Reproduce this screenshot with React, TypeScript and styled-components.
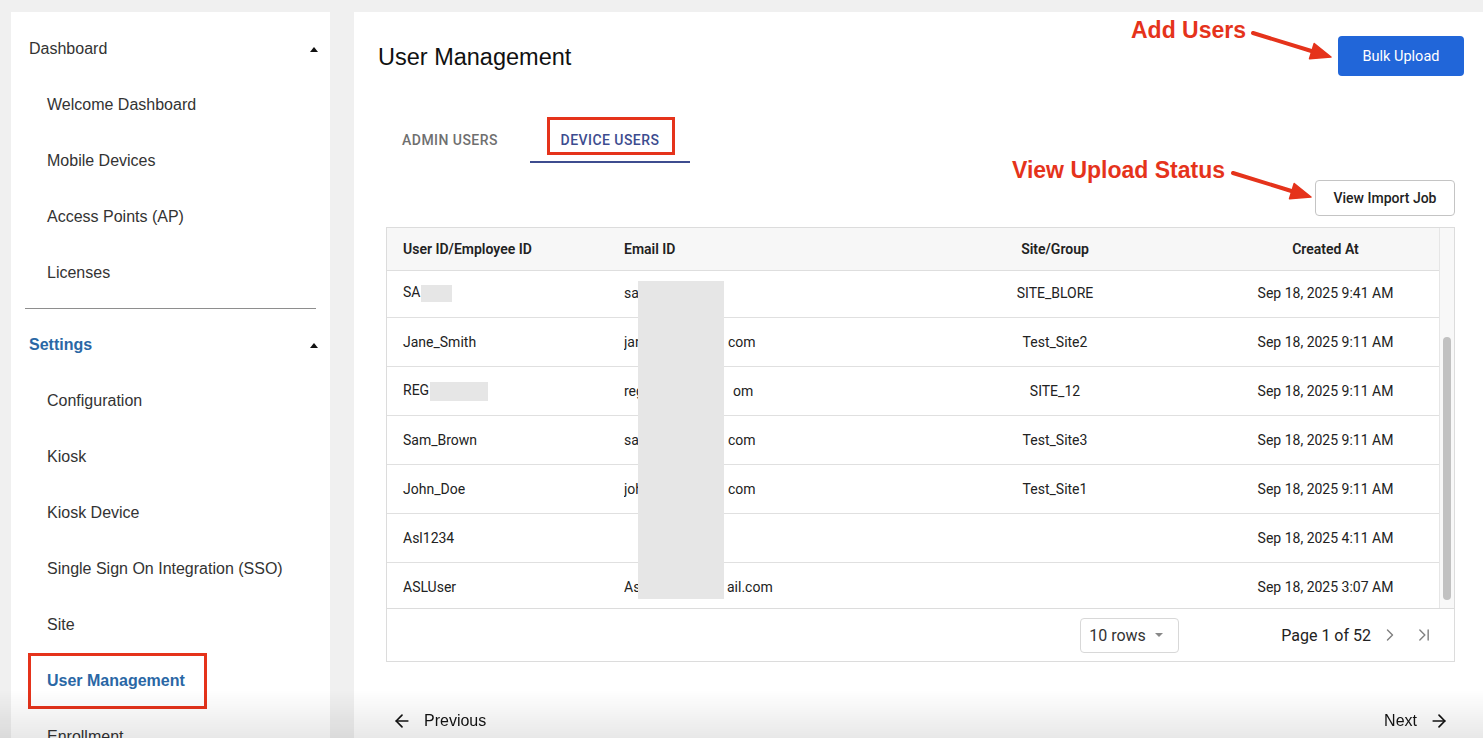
import React from 'react';
import styled, { createGlobalStyle } from 'styled-components';
import { ChevronRight, ChevronLast, ArrowLeft, ArrowRight } from 'lucide-react';

const GlobalStyle = createGlobalStyle`
  html, body { margin: 0; padding: 0; background: #f0f0f0; overflow: hidden; }
  *, *::before, *::after { box-sizing: border-box; }
  #root { height: 100vh; }
`;

const SANS = `"Liberation Sans", Arial, sans-serif`;
const ROBOTO = `Roboto, "Liberation Sans", Arial, sans-serif`;
const BLUE = '#2a67a5';
const RED = '#e5331b';

const Page = styled.div`
  display: flex;
  gap: 24px;
  height: 100vh;
  padding: 12px 0 0 11px;
`;

/* ---------- Sidebar ---------- */
const Sidebar = styled.nav`
  width: 319px;
  flex-shrink: 0;
  background: #fff;
  padding-top: 9px;
  font-family: ${SANS};
  overflow: hidden;
`;

const GroupHeader = styled.div<{ $active?: boolean }>`
  height: 56px;
  display: flex;
  align-items: center;
  justify-content: space-between;
  padding: 0 12px 0 18px;
  font-size: 16px;
  color: ${(p) => (p.$active ? BLUE : '#333')};
  font-weight: ${(p) => (p.$active ? 700 : 400)};
`;

const Caret = styled.span`
  width: 0;
  height: 0;
  border-left: 4px solid transparent;
  border-right: 4px solid transparent;
  border-bottom: 5px solid #111;
`;

const NavItem = styled.div<{ $active?: boolean; $boxed?: boolean }>`
  position: relative;
  height: 56px;
  display: flex;
  align-items: center;
  padding-left: 36px;
  font-size: 16px;
  color: ${(p) => (p.$active ? BLUE : '#333')};
  font-weight: ${(p) => (p.$active ? 700 : 400)};
  &::after {
    content: '';
    display: ${(p) => (p.$boxed ? 'block' : 'none')};
    position: absolute;
    left: 17px;
    top: 0;
    width: 179px;
    height: 56px;
    border: 3px solid ${RED};
  }
`;

const Divider = styled.div`
  height: 1px;
  background: #8e8e8e;
  margin: 7px 14px 8px 14px;
`;

/* ---------- Main ---------- */
const Main = styled.main`
  flex: 1;
  position: relative;
  background: #fff;
  display: flex;
  flex-direction: column;
  padding-top: 24px;
  overflow: hidden;
`;

const HeaderRow = styled.div`
  display: flex;
  align-items: center;
  justify-content: space-between;
  height: 40px;
  padding: 0 19px 0 24px;
`;

const Title = styled.h1`
  margin: 0;
  padding-top: 2px;
  font-family: ${SANS};
  font-weight: 400;
  font-size: 23.5px;
  color: #111;
`;

const PrimaryButton = styled.button`
  width: 126px;
  height: 40px;
  border: none;
  border-radius: 4px;
  background: #2166d9;
  color: #fff;
  font-family: ${ROBOTO};
  font-size: 14.5px;
`;

const Tabs = styled.div`
  display: flex;
  margin-top: 38px;
  padding-left: 16px;
`;

const Tab = styled.div<{ $selected?: boolean }>`
  position: relative;
  width: 160px;
  height: 49px;
  display: flex;
  align-items: center;
  justify-content: center;
  padding-top: 3px;
  font-family: ${ROBOTO};
  font-size: 14px;
  font-weight: 500;
  letter-spacing: 0.45px;
  text-transform: uppercase;
  color: ${(p) => (p.$selected ? '#3d4c8f' : '#6f6f6f')};
  &::after {
    content: '';
    display: ${(p) => (p.$selected ? 'block' : 'none')};
    position: absolute;
    left: 0;
    right: 0;
    bottom: 0;
    height: 2px;
    background: #3d4c8f;
  }
`;

const TabBox = styled.span`
  position: absolute;
  left: 17px;
  top: 3px;
  width: 128px;
  height: 38px;
  border: 3px solid ${RED};
`;

const ActionsRow = styled.div`
  display: flex;
  justify-content: flex-end;
  margin-top: 17px;
  padding-right: 28px;
`;

const OutlineButton = styled.button`
  width: 140px;
  height: 36px;
  background: #fff;
  border: 1px solid #c4c4c4;
  border-radius: 4px;
  font-family: ${ROBOTO};
  font-size: 14px;
  font-weight: 500;
  color: #222;
`;

/* ---------- Table ---------- */
const TableCard = styled.div`
  margin: 11px 28px 0 32px;
  height: 435px;
  border: 1px solid #dcdcdc;
  display: flex;
  flex-direction: column;
  font-family: ${ROBOTO};
  font-size: 14px;
  color: #222;
`;

const TableTop = styled.div`
  display: flex;
  height: 380px;
`;

const TableScroll = styled.div`
  flex: 1;
  display: flex;
  flex-direction: column;
  overflow: hidden;
`;

const COLS = '220px 291px 314px 1fr';

const HeadRow = styled.div`
  display: grid;
  grid-template-columns: ${COLS};
  height: 43px;
  align-items: center;
  background: #f7f7f7;
  border-bottom: 1px solid #dedede;
  font-weight: 600;
  flex-shrink: 0;
`;

const Cell = styled.div<{ $align?: 'left' | 'center'; $pad?: number }>`
  text-align: ${(p) => p.$align || 'left'};
  padding-left: ${(p) => (p.$align === 'center' ? 0 : p.$pad ?? 16)}px;
  white-space: nowrap;
  overflow: hidden;
`;

const Body = styled.div`
  position: relative;
  flex: 1;
  overflow: hidden;
`;

const RowList = styled.div`
  margin-top: -2px;
`;

const Row = styled.div`
  display: grid;
  grid-template-columns: ${COLS};
  height: 49px;
  align-items: center;
  border-bottom: 1px solid #e0e0e0;
`;

const Redact = styled.span<{ $w: number; $h: number }>`
  display: inline-block;
  width: ${(p) => p.$w}px;
  height: ${(p) => p.$h}px;
  background: #e6e6e6;
  vertical-align: middle;
  margin-left: 1px;
`;

const EmailCell = styled.div`
  display: grid;
  grid-template-columns: 100px auto;
  padding-left: 17px;
  white-space: nowrap;
`;

const EmailHead = styled.span`
  overflow: hidden;
`;

const EmailTail = styled.span<{ $shift: number }>`
  padding-left: ${(p) => 4 + p.$shift}px;
`;

const RedactColumn = styled.div`
  position: absolute;
  left: 251px;
  top: 10px;
  width: 86px;
  height: 318px;
  background: #e6e6e6;
`;

const ScrollTrack = styled.div`
  position: relative;
  width: 15px;
  background: #f8f8f8;
  border-left: 1px solid #e6e6e6;
`;

const ScrollThumb = styled.div`
  position: absolute;
  left: 3px;
  top: 109px;
  width: 8px;
  height: 263px;
  border-radius: 4px;
  background: #c1c1c1;
`;

const TableFooter = styled.div`
  flex: 1;
  display: flex;
  align-items: center;
  justify-content: flex-end;
  border-top: 1px solid #dcdcdc;
  padding-right: 17px;
`;

const RowsSelect = styled.div`
  width: 99px;
  height: 35px;
  display: flex;
  align-items: center;
  justify-content: space-between;
  padding: 0 15px 0 8px;
  border: 1px solid #d8d8d8;
  border-radius: 4px;
  font-size: 16px;
  color: #333;
  margin-right: 102px;
`;

const DownCaret = styled.span`
  width: 0;
  height: 0;
  border-left: 4px solid transparent;
  border-right: 4px solid transparent;
  border-top: 4px solid #888;
`;

const PageText = styled.span`
  font-size: 16px;
  color: #222;
`;

const PagerIcon = styled.span<{ $gap: number }>`
  display: flex;
  align-items: center;
  justify-content: center;
  width: 26px;
  color: #808080;
  margin-left: ${(p) => p.$gap}px;
`;

/* ---------- Bottom nav ---------- */
const BottomNav = styled.div`
  position: relative;
  z-index: 2;
  display: flex;
  justify-content: space-between;
  align-items: center;
  height: 28px;
  margin-top: 45px;
  padding: 0 34px 0 38px;
  font-family: ${SANS};
  font-size: 16px;
  color: #111;
`;

const NavLink = styled.span`
  display: flex;
  align-items: center;
  gap: 12px;
`;

const Fade = styled.div`
  position: fixed;
  left: 0;
  right: 0;
  bottom: 0;
  height: 48px;
  background: linear-gradient(to bottom, rgba(0, 0, 0, 0), rgba(0, 0, 0, 0.09));
  pointer-events: none;
  z-index: 1;
`;

/* ---------- Annotations ---------- */
const Note = styled.div<{ $x: number; $y: number }>`
  position: absolute;
  left: ${(p) => p.$x}px;
  top: ${(p) => p.$y}px;
  font-family: ${SANS};
  font-weight: 700;
  font-size: 23px;
  line-height: 26px;
  color: ${RED};
  white-space: nowrap;
`;

const ArrowSvg = styled.svg<{ $x: number; $y: number }>`
  position: absolute;
  left: ${(p) => p.$x}px;
  top: ${(p) => p.$y}px;
`;

const Arrow = ({ x, y }: { x: number; y: number }) => (
  <ArrowSvg $x={x} $y={y} width={86} height={34} viewBox="0 0 86 34">
    <line x1={4} y1={4} x2={64} y2={22.5} stroke={RED} strokeWidth={4} strokeLinecap="round" />
    <polygon points="82,28 60.5,29.8 65.2,14.5" fill={RED} stroke={RED} strokeWidth={1.5} strokeLinejoin="round" />
  </ArrowSvg>
);

type RowData = {
  id: string;
  idBox?: [number, number];
  head: string;
  tail: string;
  shift?: number;
  site: string;
  created: string;
};

const rows: RowData[] = [
  { id: 'SA', idBox: [31, 17], head: 'sa', tail: '', site: 'SITE_BLORE', created: 'Sep 18, 2025 9:41 AM' },
  { id: 'Jane_Smith', head: 'jane', tail: 'com', site: 'Test_Site2', created: 'Sep 18, 2025 9:11 AM' },
  { id: 'REG', idBox: [58, 19], head: 'reg', tail: 'om', shift: 5, site: 'SITE_12', created: 'Sep 18, 2025 9:11 AM' },
  { id: 'Sam_Brown', head: 'sam', tail: 'com', site: 'Test_Site3', created: 'Sep 18, 2025 9:11 AM' },
  { id: 'John_Doe', head: 'john', tail: 'com', site: 'Test_Site1', created: 'Sep 18, 2025 9:11 AM' },
  { id: 'Asl1234', head: '', tail: '', site: '', created: 'Sep 18, 2025 4:11 AM' },
  { id: 'ASLUser', head: 'Asl', tail: 'ail.com', shift: -1, site: '', created: 'Sep 18, 2025 3:07 AM' },
];

const dashboardItems = ['Welcome Dashboard', 'Mobile Devices', 'Access Points (AP)', 'Licenses'];
const settingsItems = ['Configuration', 'Kiosk', 'Kiosk Device', 'Single Sign On Integration (SSO)', 'Site'];

export default function App() {
  return (
    <>
      <GlobalStyle />
      <Page>
        <Sidebar>
          <GroupHeader>
            Dashboard
            <Caret />
          </GroupHeader>
          {dashboardItems.map((t) => (
            <NavItem key={t}>{t}</NavItem>
          ))}
          <Divider />
          <GroupHeader $active>
            Settings
            <Caret />
          </GroupHeader>
          {settingsItems.map((t) => (
            <NavItem key={t}>{t}</NavItem>
          ))}
          <NavItem $active $boxed>
            User Management
          </NavItem>
          <NavItem>Enrollment</NavItem>
        </Sidebar>

        <Main>
          <HeaderRow>
            <Title>User Management</Title>
            <PrimaryButton>Bulk Upload</PrimaryButton>
          </HeaderRow>

          <Tabs>
            <Tab>Admin Users</Tab>
            <Tab $selected>
              Device Users
              <TabBox />
            </Tab>
          </Tabs>

          <ActionsRow>
            <OutlineButton>View Import Job</OutlineButton>
          </ActionsRow>

          <TableCard>
            <TableTop>
              <TableScroll>
                <HeadRow>
                  <Cell>User ID/Employee ID</Cell>
                  <Cell $pad={17}>Email ID</Cell>
                  <Cell $align="center">Site/Group</Cell>
                  <Cell $align="center">Created At</Cell>
                </HeadRow>
                <Body>
                  <RowList>
                    {rows.map((r) => (
                      <Row key={r.id}>
                        <Cell>
                          {r.id}
                          {r.idBox && <Redact $w={r.idBox[0]} $h={r.idBox[1]} />}
                        </Cell>
                        <EmailCell>
                          <EmailHead>{r.head}</EmailHead>
                          <EmailTail $shift={r.shift ?? 0}>{r.tail}</EmailTail>
                        </EmailCell>
                        <Cell $align="center">{r.site}</Cell>
                        <Cell $align="center">{r.created}</Cell>
                      </Row>
                    ))}
                  </RowList>
                  <RedactColumn />
                </Body>
              </TableScroll>
              <ScrollTrack>
                <ScrollThumb />
              </ScrollTrack>
            </TableTop>
            <TableFooter>
              <RowsSelect>
                10 rows
                <DownCaret />
              </RowsSelect>
              <PageText>Page 1 of 52</PageText>
              <PagerIcon $gap={6}>
                <ChevronRight size={20} strokeWidth={1.7} />
              </PagerIcon>
              <PagerIcon $gap={8}>
                <ChevronLast size={20} strokeWidth={1.7} />
              </PagerIcon>
            </TableFooter>
          </TableCard>

          <BottomNav>
            <NavLink>
              <ArrowLeft size={20} strokeWidth={2} />
              Previous
            </NavLink>
            <NavLink>
              Next
              <ArrowRight size={20} strokeWidth={2} />
            </NavLink>
          </BottomNav>

          <Note $x={777} $y={5}>Add Users</Note>
          <Arrow x={895} y={17} />
          <Note $x={658} $y={145}>View Upload Status</Note>
          <Arrow x={875} y={157} />
        </Main>
      </Page>
      <Fade />
    </>
  );
}
